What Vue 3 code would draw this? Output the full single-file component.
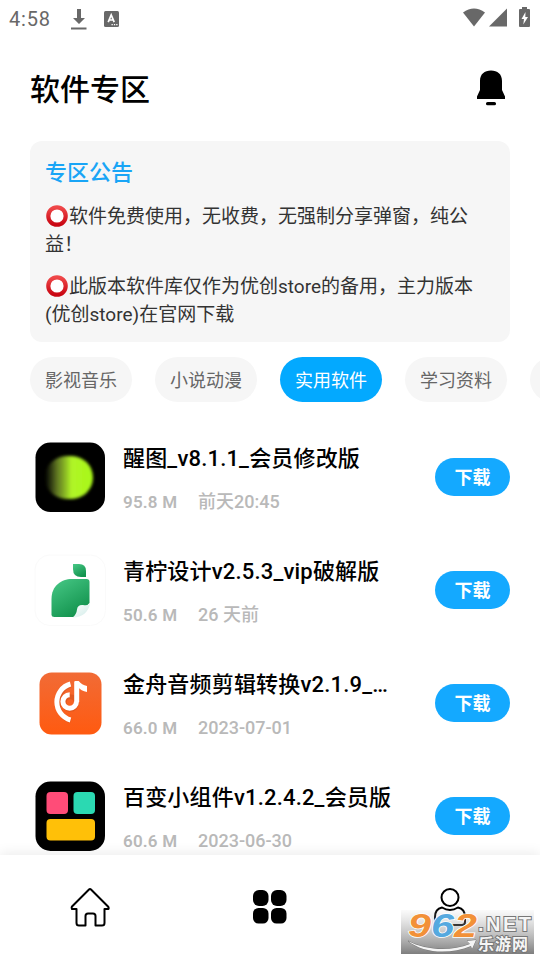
<script setup>
const chips = ['影视音乐', '小说动漫', '实用软件', '学习资料', '']
const activeChip = 2
const notices = [
  '软件免费使用，无收费，无强制分享弹窗，纯公益！',
  '此版本软件库仅作为优创store的备用，主力版本(优创store)在官网下载',
]
const apps = [
  { icon: 'xingtu', title: '醒图_v8.1.1_会员修改版', size: '95.8 M', date: '前天20:45' },
  { icon: 'lime', title: '青柠设计v2.5.3_vip破解版', size: '50.6 M', date: '26 天前' },
  { icon: 'audio', title: '金舟音频剪辑转换v2.1.9_…', size: '66.0 M', date: '2023-07-01' },
  { icon: 'widget', title: '百变小组件v1.2.4.2_会员版', size: '60.6 M', date: '2023-06-30' },
]
</script>

<template>
  <div class="screen">
    <div class="status">
      <span class="clock">4:58</span>
      <svg class="dl" width="16" height="21" viewBox="0 0 16 21" fill="#686868">
        <path d="M6 0h4v9h4l-6 6-6-6h4z" /><path d="M0 18.5h15.500v2H0z" />
      </svg>
      <svg class="abox" width="15" height="16" viewBox="0 0 15 16">
        <rect width="15" height="16" rx="1.500" fill="#686868" />
        <path d="M4.200 11.200L7.200 4l3 7.200M5.300 9h4" fill="none" stroke="#fff" stroke-width="1.700" />
        <path d="M7.500 13h1.300v1.300H7.500zM9.900 13h1.300v1.300H9.900zM12.200 13h1.300v1.300h-1.300z" fill="#fff" />
      </svg>
      <svg class="sys" width="68" height="20" viewBox="0 0 68 20" fill="#686868">
        <path d="M0 4.500Q11 -3.500 22 4.500L11 18.500z" />
        <path d="M26 18.500L44 0.500V18.500z" />
        <path d="M59 -1h5v2h2q1 0 1 1v16q0 1-1 1h-9q-1 0-1-1V2q0-1 1-1h2z" />
        <path d="M62.500 4L58.500 11h2.500l-.7 5.500L65 9h-2.700z" fill="#fff" />
      </svg>
    </div>

    <header class="header">
      <h1>软件专区</h1>
      <svg width="28" height="36" viewBox="0 0 28 36">
        <path d="M0 29v-2.500L3 20v-9C3 4 7.500 .5 14 .5S25 4 25 11v9l3 6.500V29z" />
        <rect x="9" y="32" width="10" height="3.300" rx="1.600" />
      </svg>
    </header>

    <section class="notice">
      <h2>专区公告</h2>
      <p v-for="text in notices" :key="text">
        <svg class="ring" width="23" height="22" viewBox="0 0 23 22">
          <defs>
            <linearGradient id="red" x2="0" y2="1"><stop stop-color="#ef4849" /><stop offset="1" stop-color="#c90612" /></linearGradient>
          </defs>
          <circle cx="12" cy="11" r="8.700" fill="#fff" stroke="url(#red)" stroke-width="4.200" />
        </svg>{{ text }}
      </p>
    </section>

    <nav class="chips">
      <span v-for="(c, i) in chips" :key="i" class="chip" :class="{ active: i === activeChip }">{{ c }}</span>
    </nav>

    <main class="list">
      <article v-for="a in apps" :key="a.title" class="item">
        <svg class="icon" width="72" height="72" viewBox="0 0 72 72">
          <template v-if="a.icon === 'xingtu'">
            <defs>
              <linearGradient id="glow" gradientUnits="userSpaceOnUse" x1="11" y1="0" x2="59" y2="0"><stop stop-color="#6f8530" stop-opacity="0" /><stop offset=".25" stop-color="#779429" stop-opacity=".8" /><stop offset=".55" stop-color="#b0f428" /><stop offset="1" stop-color="#a8f817" /></linearGradient>
              <filter id="soft" x="-30%" y="-30%" width="160%" height="160%"><feGaussianBlur stdDeviation="1.800" /></filter>
            </defs>
            <rect x="1.500" y="1.500" width="69.500" height="69.500" rx="15" />
            <rect x="11" y="15" width="48" height="43" rx="21.500" fill="url(#glow)" filter="url(#soft)" />
          </template>
          <template v-else-if="a.icon === 'lime'">
            <defs>
              <linearGradient id="leaf" x2=".6" y2="1"><stop stop-color="#48c987" /><stop offset="1" stop-color="#13934e" /></linearGradient>
              <linearGradient id="fold" x2="1" y2="1"><stop stop-color="#fff" /><stop offset="1" stop-color="#cfebe7" /></linearGradient>
            </defs>
            <rect x="1" y="1" width="70.500" height="70.500" rx="15" fill="#fff" stroke="#fafafa" />
            <path d="M39 10h6q7 0 7 7v6h-5q-8 0-8-8z" fill="url(#leaf)" />
            <path d="M17.500 60V45C17.500 32 27 25 38 25h14.500q3 0 3 3v21L41 63H20.500q-3 0-3-2.500z" fill="url(#leaf)" />
            <path d="M56 50C54 58 49 63.500 38.500 63.500q4-3 4.500-8t6-4.500q4 1 7-1z" fill="url(#fold)" />
          </template>
          <template v-else-if="a.icon === 'audio'">
            <defs><linearGradient id="orange" x2="0" y2="1"><stop stop-color="#f16b36" /><stop offset="1" stop-color="#ff5a10" /></linearGradient></defs>
            <rect x="5.500" y="5.500" width="62" height="62" rx="12" fill="url(#orange)" />
            <g transform="translate(.8 1)" fill="none" stroke="#b84616" stroke-opacity=".35" stroke-width="5">
              <path d="M36 17A19 19 0 0 0 36 53" /><circle cx="35.500" cy="35" r="6.200" />
            </g>
            <g fill="none" stroke="#fff" stroke-width="5">
              <path d="M36.500 17A18.700 18.700 0 0 0 36.500 53" />
              <path d="M42.500 34.500a6.800 6.800 0 1 1-6.800-6.800" /><path d="M42.700 35V15" />
            </g>
            <path d="M40.200 14h4.500q3 4 8.300 5v6q-6-1-9-5z" fill="#fff" />
          </template>
          <template v-else>
            <rect x="1.500" y="1.500" width="69.500" height="69.500" rx="15" />
            <rect x="12.500" y="12" width="21.500" height="22" rx="4" fill="#ff4c78" />
            <rect x="39.500" y="12" width="21.500" height="22" rx="4" fill="#2bd9b2" />
            <rect x="12.500" y="39" width="48.500" height="21.500" rx="4" fill="#ffc008" />
          </template>
        </svg>
        <div class="info">
          <div class="name">{{ a.title }}</div>
          <div class="meta"><span class="size">{{ a.size }}</span><span class="date">{{ a.date }}</span></div>
        </div>
        <button class="get">下载</button>
      </article>
    </main>

    <footer class="tabs">
      <div class="tab">
        <svg width="40" height="40" viewBox="0 0 40 40" fill="none" stroke="#000" stroke-width="2" stroke-linejoin="round">
          <path d="M19 1.500q1-1 2 0L38 18.500q1 1 .5 2.500H34.500v14q0 2.500-2.500 2.500H25.500V28q0-2.500-2.500-2.500h-5q-2.500 0-2.500 2.500v9.500H9Q6.500 37.500 6.500 35V21H2q-.7-1.500 0-2.500z" />
        </svg>
      </div>
      <div class="tab">
        <svg class="grid" width="34" height="34" viewBox="0 0 34 34">
          <rect x="0" y="0" width="15.500" height="16" rx="6" /><rect x="18" y="0" width="15.500" height="16" rx="6" />
          <rect x="0" y="18" width="15.500" height="15.500" rx="5.500" /><rect x="18" y="18" width="15.500" height="15.500" rx="5.500" />
        </svg>
      </div>
      <div class="tab">
        <svg width="34" height="40" viewBox="0 0 34 40" fill="none" stroke="#000" stroke-width="2">
          <circle cx="17" cy="9.500" r="8.500" />
          <path d="M9 19.500Q2 21 2 29v5q0 3 3 3h24q3 0 3-3v-5q0-8-7-9.500-8 5-16 0z" />
        </svg>
      </div>
    </footer>

    <svg class="stamp" width="133" height="44" viewBox="0 0 133 44">
      <defs>
        <linearGradient id="shade" x2="0" y2="1"><stop stop-color="#aaa" stop-opacity=".05" /><stop offset="1" stop-color="#777" stop-opacity=".95" /></linearGradient>
      </defs>
      <rect width="133" height="44" fill="url(#shade)" />
      <g class="digits" stroke="#fff" stroke-width="1.500" paint-order="stroke">
        <text x="7" y="27" textLength="23" lengthAdjust="spacingAndGlyphs" fill="#f29138">9</text>
        <text x="30" y="27" textLength="23" lengthAdjust="spacingAndGlyphs" fill="#55a9df">6</text>
        <text x="53" y="27" textLength="23" lengthAdjust="spacingAndGlyphs" fill="#f29138">2</text>
      </g>
      <g fill="#f5f5f5" stroke="#777" stroke-width="2" paint-order="stroke">
        <text class="net" x="77" y="20.500" textLength="53" lengthAdjust="spacing">.NET</text>
        <text class="cn" x="77" y="40" textLength="50">乐游网</text>
        <path d="M7 31C24 40 49 42 69 34l-3-3 9-1-4 9-1-3C48 45 22 43 7 31z" stroke-width="1" />
      </g>
    </svg>
  </div>
</template>

<style>
body { background: #fff; }
</style>

<style scoped>
.screen {
  position: relative; display: flex; flex-direction: column; width: 540px; height: 960px; overflow: hidden;
  background: #fff; color: #000; font-family: Roboto, "Noto Sans CJK SC", sans-serif;
}
.status { display: flex; align-items: center; flex: none; height: 37px; padding: 0 9px; color: #686868; }
.clock { width: 62px; font-size: 20px; letter-spacing: .8px; }
.dl { margin-top: 1px; }
.abox { margin-left: 17px; }
.sys { margin-left: auto; overflow: visible; margin-bottom: 1px; }
.header { display: flex; align-items: center; justify-content: space-between; flex: none; height: 104px; padding: 0 35px 0 30px; box-sizing: border-box; }
h1 { margin: 2px 0 0; font-size: 30px; font-weight: 500; line-height: 44px; }
.header svg { margin-bottom: 2px; }
.notice { flex: none; height: 201px; margin: 0 30px; padding: 15px 15px 0; box-sizing: border-box; border-radius: 12px; background: #f6f6f6; }
h2 { margin: 0 0 14px; font-size: 22px; line-height: 33px; font-weight: 500; color: #19a5f6; }
p { margin: 0 0 14px; font-size: 19px; line-height: 28px; color: #333; }
.ring { margin-right: 1px; vertical-align: -4px; }
.chips { display: flex; gap: 23px; flex: none; margin: 15px 0 18px 30px; }
.chip { flex: none; box-sizing: border-box; width: 102px; height: 45px; padding-top: 1px; border-radius: 23px; background: #f6f6f6; color: #666; font-size: 18px; line-height: 45px; text-align: center; }
.active { background: #03a9ff; color: #fff; }
.list { flex: 1; min-height: 0; overflow: hidden; }
.item { display: flex; align-items: center; height: 113px; padding: 0 30px 0 34px; }
.icon { flex: none; margin-top: 1px; }
.info { flex: none; width: 270px; margin: 5px 0 0 17px; }
.name { font-size: 22px; line-height: 30px; font-weight: 500; letter-spacing: .18px; white-space: nowrap; overflow: hidden; text-overflow: ellipsis; }
.meta { display: flex; margin-top: 16px; line-height: 24px; font-weight: 500; color: #b9b9b9; }
.size { width: 75px; font-size: 17px; font-weight: 600; letter-spacing: .2px; }
.date { font-size: 18px; }
.get { width: 75px; height: 38px; margin-left: auto; padding: 1px 0 0; border: 0; border-radius: 19px; background: #14a9ff; color: #fff; font-family: inherit; font-size: 18px; font-weight: 600; line-height: 37px; }
.tabs { position: relative; display: flex; flex: none; height: 105px; background: #fff; box-shadow: 0 -2px 12px rgba(0, 0, 0, .08); }
.tab { display: flex; flex: 1; align-items: center; justify-content: center; }
.grid { margin-bottom: 1px; }
.stamp { position: absolute; left: 401px; top: 910px; }
.digits { font: italic 900 34px "Liberation Sans", sans-serif; }
.net { font: bold 20px "Liberation Sans", sans-serif; }
.cn { font: bold 16px "Noto Sans CJK SC", sans-serif; }
</style>
